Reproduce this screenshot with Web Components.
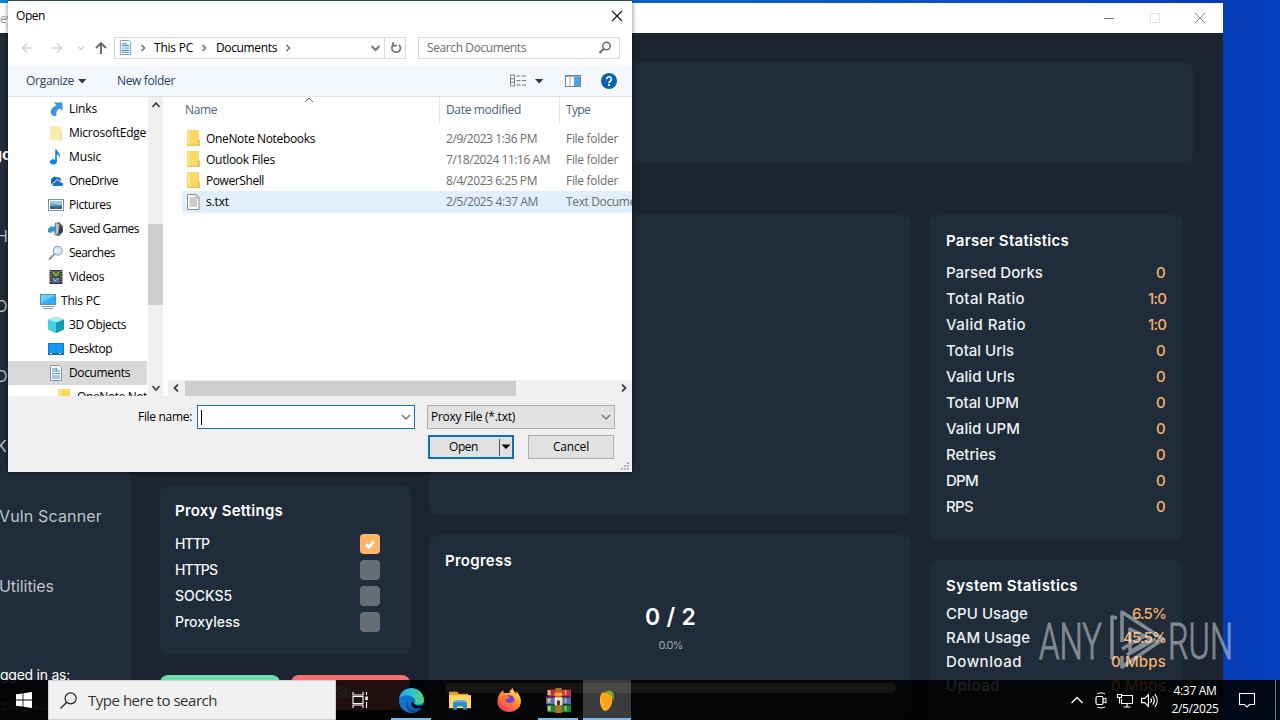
<!DOCTYPE html>
<html lang="en">
<head>
<meta charset="utf-8">
<title>Desktop</title>
<style>
  html, body { margin: 0; width: 1280px; height: 720px; overflow: hidden; }
</style>
</head>
<body>
<desk-top>
  <parser-window></parser-window>
  <open-dialog></open-dialog>
  <any-run-mark></any-run-mark>
  <task-bar></task-bar>
</desk-top>

<script>
const ICONS = {
  back: `<path d="M12.5 8h-10M7 3.5L2.5 8 7 12.5" fill="none" stroke="#d4d4d4" stroke-width="1.5"/>`,
  forward: `<path d="M3.500 8h10M9 3.500L13.500 8 9 12.500" fill="none" stroke="#d4d4d4" stroke-width="1.5"/>`,
  smallDown: `<path d="M5 6.500l3 3 3-3" fill="none" stroke="#cfcfcf" stroke-width="1.300"/>`,
  up: `<path d="M8 14V3M3 8l5-5 5 5" fill="none" stroke="#666" stroke-width="1.900"/>`,
  right: `<path d="M6.500 5L9.500 8l-3 3" fill="none" stroke="#777" stroke-width="1.700"/>`,
  down: `<path d="M4 6l4 4 4-4" fill="none" stroke="#777" stroke-width="1.500"/>`,
  boldDown: `<path d="M4.500 6l4 4 4-4" fill="none" stroke="#777" stroke-width="2"/>`,
  scrollUp: `<path d="M4.500 10L8 6l3.500 4" fill="none" stroke="#444" stroke-width="1.800"/>`,
  scrollDown: `<path d="M4.500 6L8 10l3.500-4" fill="none" stroke="#444" stroke-width="1.800"/>`,
  scrollLeft: `<path d="M10 4.500L6.500 8l3.500 3.500" fill="none" stroke="#444" stroke-width="1.800"/>`,
  scrollRight: `<path d="M6 4.500L9.500 8 6 11.500" fill="none" stroke="#444" stroke-width="1.800"/>`,
  refresh: `<path d="M12 4.800a4.300 4.300 0 1 1-5.500-.2M6 2v3.600h3.800" fill="none" stroke="#6d6d6d" stroke-width="1.600"/>`,
  lens: `<circle cx="9.500" cy="6" r="3.700" fill="none" stroke="#6d6d6d" stroke-width="1.500"/><path d="M6.800 8.800L2.500 13" stroke="#6d6d6d" stroke-width="2"/>`,
  caret: `<path d="M4 6h8.400l-4.200 4.500z" fill="#27364f"/>`,
  blackCaret: `<path d="M3.500 5.500h9L8 10z" fill="#000"/>`,
  close: `<path d="M3 3l10 10M13 3L3 13" stroke="#111" stroke-width="1.100"/>`,
  winClose: `<path d="M3 3l10 10M13 3L3 13" stroke="#888" stroke-width="1"/>`,
  winMin: `<path d="M3 8.500h10" stroke="#777" stroke-width="1"/>`,
  winMax: `<rect x="3.500" y="3.500" width="9" height="9" fill="none" stroke="#e3e3e3"/>`,
  view: `<path d="M.5 2h4v11h-4zM.5 5.700h4M.5 9.300h4" fill="none" stroke="#777" stroke-width=".9"/><path d="M6.500 3h4m1.500 0h4M6.500 7.500h4m1.500 0h4M6.500 12h4m1.500 0h4" stroke="#777"/>`,
  pane: `<rect x=".5" y="2.500" width="15" height="11" fill="#fff" stroke="#7b858f"/><path d="M0 3h16" stroke="#7b858f" stroke-width="1.500"/><path d="M5 3v10" stroke="#aaa"/><rect x="9" y="4" width="6" height="9" fill="#4ba3e3"/>`,
  help: `<circle cx="8" cy="8" r="8" fill="#0a62b5"/><path d="M5.600 6.200a2.400 2.400 0 1 1 3.700 2c-.9.600-1.300 1-1.300 2" fill="none" stroke="#fff" stroke-width="1.700"/><rect x="7.100" y="11.200" width="1.800" height="1.800" fill="#fff"/>`,
  links: `<path d="M6 1.500h8.500V10L11.700 7.400C9 9 7.600 11 8.700 15H5C.5 10.500 3.500 6.500 8.400 4.200z" fill="#3d93dc"/>`,
  folderPale: `<path d="M2 1h11v5l1 1v8.500H2z" fill="#faedb4"/><path d="M12 7h2v8.500h-2" fill="#f4e19a"/>`,
  folder: `<path d="M2 0h12v9l.7 1v5.500H2z" fill="#fbd968"/><path d="M3 1h1.800v13.500H3" fill="#ffe792"/><path d="M12.700 9.500h2v6h-2z" fill="#ebbd4c"/><path d="M2 15.300h12.700" stroke="#dcaf3a" stroke-width=".8"/>`,
  music: `<ellipse cx="5.300" cy="12.800" rx="3.500" ry="2.600" fill="#1583dc"/><path d="M7.200.5h1.500c.4 3 4.800 4 3.200 9.200.1-3-1.400-3.800-3.100-4.400V13H7.200z" fill="#1583dc"/>`,
  onedrive: `<path d="M3 9C2.600 5 6 2.500 9 4.400c2-.5 4 .8 4 3.100l-2.600 4.200H3.600A3 3 0 0 1 3 9" fill="#0b64b5"/><path d="M5.500 13.500c-2-1-1.500-4.300 1-4.300C7.500 6 11.500 6 12.200 8.800c3.700-.4 4.200 4 1.700 4.700z" fill="#1673cc" stroke="#fff" stroke-width="1"/>`,
  pictures: `<rect x=".5" y="2.500" width="15" height="11" fill="#fff" stroke="#89929c"/><rect x="2" y="4" width="12" height="8" fill="#8fcbf1"/><path d="M2 8.500l5 1 7-1.500v4H2z" fill="#3b6384"/><path d="M2 7c3-1 4 1 7 1l5 .5v1l-6 .5z" fill="#5c859a"/>`,
  games: `<path d="M7 2l4-1 4 4v6l-4 4-5-1z" fill="#596364"/><path d="M8 2l3 1-1 10-4 1z" fill="#b5c0c1"/><path d="M12 5l2 2v4l-3 2z" fill="#303638"/><path d="M0 8l3-3 2 1 3-1v7l-3-2-2 2-3-1z" fill="#398ecf"/>`,
  search: `<circle cx="9.700" cy="5.700" r="4.400" fill="#d9f0fb" stroke="#94a7b5" stroke-width="1.200"/><path d="M6.300 9.200L1 14.500" stroke="#7f98aa" stroke-width="2"/>`,
  videos: `<rect x="1.500" y="1" width="13" height="14" fill="#343434"/><path d="M3 2v12M13 2v12" stroke="#eee" stroke-width="1" stroke-dasharray="1 1.500"/><rect x="4.500" y="2" width="7" height="5.500" fill="#4b7a43"/><rect x="4.500" y="8.500" width="7" height="5.500" fill="#4066b5"/><path d="M5 3l3 4 3-4M5 9l2 3 4-3" stroke="#d3c642" fill="none"/>`,
  pc: `<rect x=".5" y="1.500" width="15" height="10" fill="#35aef3" stroke="#4b92c4"/><path d="M1 2h14L1 10z" fill="#72cdf9"/><path d="M1 13.500h14M3 15.500h10" stroke="#8ba7b8"/>`,
  cube: `<path d="M8 0l8 2.500v10L8 16l-8-3.500v-10z" fill="#2ab9c9"/><path d="M0 2.500l8 3V16l-8-3.500z" fill="#48d0dc"/><path d="M8 5.500l8-3v10L8 16z" fill="#169bae"/><path d="M0 2.500L8 0l8 2.500-8 3z" fill="#a8eef1"/>`,
  desktop: `<rect x=".5" y="2.500" width="15" height="11" fill="#159bf6" stroke="#157bbc"/><path d="M1 12.500h14" stroke="#0c5c96"/><path d="M2 12.500h2m7 0h2" stroke="#fff"/>`,
  documents: `<path d="M2.500.5h9l2 2v13h-11z" fill="#fff" stroke="#8798a4"/><path d="M4 4h4M4 6h8M4 8.500h2m1 0h5M4 11h8M4 13h8M8.500 3v3" stroke="#3f96cf" stroke-width="1.200"/>`,
  text: `<path d="M2.500.5h9l2.500 2.500v12.500H2.500z" fill="#fff" stroke="#8d8d8d"/><path d="M4.500 4h6M4.500 6h7.500M4.500 8h7.500M4.500 10h7.500M4.500 12h7.500" stroke="#9b9b9b"/><path d="M11 0v4h3" fill="#eee" stroke="#999"/>`,
  check: `<path d="M4 8.500l2.800 2.600L12 5.700" fill="none" stroke="#fff" stroke-width="2.900"/>`,
  start: `<path d="M0 2.300l6.600-.9v6.200H0zM7.400 1.300L16 0v7.600H7.400zM0 8.400h6.600v6.200L0 13.700zM7.400 8.400H16V16l-8.600-1.200z" fill="#fff"/>`,
  taskSearch: `<circle cx="10" cy="6" r="5.200" fill="none" stroke="#222" stroke-width="1.100"/><path d="M6.300 9.700L.5 15.500" stroke="#222" stroke-width="1.200"/>`,
  taskView: `<path d="M1 0v3h10V0M1 16v-3h10v3M1 4.500h10v7H1zM14.500 0v3m0 7v6" fill="none" stroke="#fff" stroke-width="1.100"/><rect x="13.300" y="4.500" width="2.500" height="3.500" fill="#fff"/>`,
  edge: `<defs><linearGradient id="e" x1="0" x2="1"><stop offset="0" stop-color="#22a6e8"/><stop offset=".6" stop-color="#35c9c3"/><stop offset="1" stop-color="#61d75b"/></linearGradient></defs><circle cx="8" cy="8" r="8" fill="#1273cd"/><path d="M.2 6.500C1-1.500 14.700-2.600 16 7.500c.2 3-4.800 4-5.900 2.300C12 6.200 4.500 2.300.2 6.500z" fill="url(#e)"/><path d="M6 7c-1.800 4 1.700 9 8.600 6C9 18.800 1.600 14 6 7z" fill="#0b4ba3"/><path d="M9.500 10.200c2 1.700 4.500 1.500 6.200.2l-1 2.300c-3.800 1.200-6.600.2-7-2.700 0-1.500 1.500-1.500 1.800.2z" fill="#05070c"/>`,
  explorer: `<path d="M0 2h6l1 1.500h7V6H0z" fill="#dca32d"/><path d="M0 4.500h16V14H0z" fill="#ffd567"/><path d="M3 9.500h10V15h-2.800v-2.500H5.800V15H3z" fill="#308bc9"/><path d="M4 8h8v1.500H4z" fill="#63b4df"/>`,
  firefox: `<defs><linearGradient id="f" x1=".9" y1="0" x2=".2" y2="1"><stop offset="0" stop-color="#fff047"/><stop offset=".45" stop-color="#ff9730"/><stop offset="1" stop-color="#f22b65"/></linearGradient></defs><path d="M2 3.500l2-2 .5 1.800h4C8 2 9.500 1 10.500 0c.3 2.500 1.800 2.500 2.500 4V2c3.500 4.500 4 8.500 1 11.700C8.500 18.500 0 15.500.3 8.500.4 6.500 1 5 2 3.500z" fill="url(#f)"/><circle cx="8" cy="8.300" r="3.700" fill="#7341d8"/><path d="M4 5c2-1 4 0 4.300 1.600L5.500 8c1 2.500 4 2.800 6 .3.200 6-8.500 5-8.300 0z" fill="#ff722f"/>`,
  winrar: `<path d="M1 1h15v4.500H1z" fill="#c52b4c"/><path d="M0 6h16v4.500H0z" fill="#536bc1"/><path d="M1 11h15v4.500H1z" fill="#188a31"/><path d="M1 1.500h2v3H1m0 2h2v3H1m0 2h2v3H1m11-13h1v3h-1m0 2h1v3h-1m0 2h1v3h-1" fill="#d3c265"/><path d="M6 0h4v16H6z" fill="#bf6a22"/><path d="M5.500 3h5v2h-5" fill="#f6a928"/><path d="M5.500 6h5v5h-5" fill="#f6e4c7"/><path d="M7 8h2v3H7" fill="#523221"/>`,
  mango: `<path d="M4 3c3-2 8-.4 8 4.500 0 4-2.500 8-5 8.500C3.500 16 1.500 7 4 3z" fill="#ffa51d"/><path d="M3.500 5c.5 5 1 7 3 10-3-2-4-6-3-10z" fill="#ffc230"/><path d="M7 2c3-2.200 7-.8 6 6C12 4.800 9.500 4.200 7 2z" fill="#78a92c"/><path d="M6 3l.5-3 1.500 2" fill="#735125"/>`,
  trayUp: `<path d="M2.500 11L8 5.500l5.500 5.500" fill="none" stroke="#fff" stroke-width="1.300"/>`,
  camera: `<rect x="3" y="4.500" width="7" height="8" rx="1.500" fill="none" stroke="#fff" stroke-width="1.200"/><path d="M10 7.500L13 6v5l-3-1.500M4 2c2-1.500 6-1.500 8 0M4 15c2 1.200 6 1.200 8 0" fill="none" stroke="#fff"/>`,
  network: `<path d="M4 3.500h11.500v8H4.500V7M10 11.500V15M6.500 15h7M.5 2.500h4v3h-4zM2.500 5.500v6" fill="none" stroke="#fff" stroke-width="1.100"/>`,
  volume: `<path d="M.5 6h3l3.500-3.500v11L3.500 10h-3zM9 6q1.700 2 0 4M11 4q3 4 0 8M13 2q4.600 6 0 12" fill="none" stroke="#fff" stroke-width="1.100"/>`,
  notice: `<path d="M.5 1.500h15v11h-5L8 15l-2.500-2.500h-5z" fill="none" stroke="#fff" stroke-width="1.100"/>`
};

class UiIcon extends HTMLElement {
  constructor() {
    super();
    this.attachShadow({ mode: "open" });
  }

  connectedCallback() {
    const size = this.getAttribute("size") || 16;
    this.shadowRoot.innerHTML = `
      <style>
        :host { display: block; flex: none; width: ${size}px; height: ${size}px; }
        svg { display: block; overflow: visible; }
      </style>
      <svg width="${size}" height="${size}" viewBox="0 0 16 16">${ICONS[this.getAttribute("name")] || ""}</svg>`;
  }
}

// text label whose letter spacing is tuned so it takes up `w` pixels
class FitText extends HTMLElement {
  constructor() {
    super();
    this.attachShadow({ mode: "open" });
    // no whitespace around the slot: it would be kept by white-space: pre
    this.shadowRoot.innerHTML = "<style>:host { display: inline-block; flex: none; white-space: pre; }</style><slot></slot>";
  }

  connectedCallback() {
    const target = parseFloat(this.getAttribute("w"));
    const natural = this.getBoundingClientRect().width;
    const count = this.textContent.length;
    if (!target || !natural) return;
    this.style.letterSpacing = `${(target - natural) / count}px`;
  }
}

const fit = (text, w) => `<fit-text w="${w}">${text}</fit-text>`;

class StatRow extends HTMLElement {
  constructor() {
    super();
    this.attachShadow({ mode: "open" });
    this.shadowRoot.innerHTML = `
      <style>
        :host { display: flex; justify-content: space-between; align-items: center; height: var(--row, 26px); font-size: 15px; font-weight: 450; color: #edf0f3; }
        ::slotted([slot="value"]) { color: #f4b16e; }
      </style>
      <slot></slot><slot name="value"></slot>`;
  }
}

class CheckRow extends HTMLElement {
  constructor() {
    super();
    this.attachShadow({ mode: "open" });
    const on = this.hasAttribute("checked");
    this.shadowRoot.innerHTML = `
      <style>
        :host { display: flex; justify-content: space-between; align-items: center; height: 26px; font-size: 14px; font-weight: 450; line-height: 17px; color: #f4f6f8; }
        ::slotted(*) { padding-bottom: 1px; }
        .box { width: 20px; height: 20px; border-radius: 4px; background: ${on ? "#ffb46b" : "#686e75"}; display: grid; place-items: center; }
      </style>
      <slot></slot><span class="box">${on ? '<ui-icon name="check"></ui-icon>' : ""}</span>`;
  }
}

class PanelCard extends HTMLElement {
  constructor() {
    super();
    this.attachShadow({ mode: "open" });
    this.shadowRoot.innerHTML = `
      <style>
        :host { display: block; box-sizing: border-box; background: #202c39; border-radius: 8px; padding: 13px 16px 0; }
        .title { display: block; height: 26px; line-height: 26px; font-size: 15px; font-weight: 600; color: #fff; }
      </style>
      <span class="title"><slot name="title"></slot></span>
      <slot></slot>`;
  }
}

class ParserWindow extends HTMLElement {
  constructor() {
    super();
    this.attachShadow({ mode: "open" });
    const stats = [
      ["Parsed Dorks", 97, "0", 10], ["Total Ratio", 79, "1:0", 18], ["Valid Ratio", 80, "1:0", 18],
      ["Total Urls", 68, "0", 10], ["Valid Urls", 69, "0", 10], ["Total UPM", 73, "0", 10],
      ["Valid UPM", 74, "0", 10], ["Retries", 50, "0", 10], ["DPM", 32, "0", 10], ["RPS", 27, "0", 10]
    ];
    const system = [
      ["CPU Usage", 82, "6.5%", 34], ["RAM Usage", 84, "45.5%", 43],
      ["Download", 76, "0 Mbps", 55], ["Upload", 54, "0 Mbps", 55]
    ];
    const rows = list => list.map(([label, w, value, vw]) =>
      `<stat-row>${fit(label, w)}<fit-text slot="value" w="${vw}">${value}</fit-text></stat-row>`).join("");

    this.shadowRoot.innerHTML = `
      <style>
        :host { position: absolute; left: 0; top: 3px; width: 1223px; height: 717px; display: flex; flex-direction: column; background: #1c2431; font-family: Inter, "Open Sans", sans-serif; overflow: hidden; }
        .title { height: 30px; background: #fff; display: flex; align-items: center; box-sizing: border-box; padding-right: 15px; gap: 29.5px; flex: none; }
        .title span { flex: 1; font: 12px "Open Sans", sans-serif; color: #999; }
        .main { flex: 1; display: flex; min-height: 0; }
        .side { width: 130px; background: #202c39; color: #bec4ca; font-size: 16px; overflow: hidden; }
        .logo { height: 168px; box-sizing: border-box; padding-top: 110px; margin-left: -8px; font-size: 16px; line-height: 22px; font-weight: 700; color: #fff; }
        .item { height: 70px; line-height: 70px; margin-left: -4px; }
        .item fit-text { margin-left: 3px; }
        .user { font-size: 14px; color: #fff; padding-top: 42px; line-height: 24px; }
        .user div { font-size: 11px; line-height: 38px; color: #8b929a; }
        .page { flex: 1; padding: 30px 30px 0; min-width: 0; }
        .hero { height: 100px; border-radius: 8px; background: #202c39; }
        .cols { display: flex; margin-top: 52px; align-items: flex-start; }
        .left { width: 250px; margin: 271px 20px 0 0; }
        .mid { width: 481px; margin-right: 19px; display: grid; gap: 20px; }
        .right { width: 252px; display: grid; gap: 20px; }
        .left panel-card { height: 169px; padding: 12px 30px 0 15px; }
        .left .list { padding-top: 7px; }
        .buttons { display: flex; gap: 11px; margin-top: 20px; }
        .buttons div { flex: 1; height: 35px; border-radius: 8px; background: #6be0ac; line-height: 35px; text-align: center; font-size: 14px; color: #fff; }
        .buttons .stop { background: #fb6e70; }
        .log { height: 300px; }
        .progress { height: 180px; padding: 13px 15px 0; }
        .count { text-align: center; color: #fff; font-weight: 600; font-size: 23px; line-height: 30px; margin-top: 28px; }
        .pct { text-align: center; color: #a0a7ae; font-size: 11px; line-height: 16px; margin-top: 5px; }
        .bar { height: 10px; margin-top: 30px; border-radius: 5px; background: #a8a094; }
        .stats { height: 325px; }
        .stats .list { padding-top: 5px; }
        .system { height: 160px; --row: 24px; }
        .system .list { padding-top: 2px; }
      </style>
      <div class="title"><span>ey</span>
        <ui-icon name="winMin"></ui-icon><ui-icon name="winMax"></ui-icon><ui-icon name="winClose"></ui-icon></div>
      <div class="main">
        <div class="side">
          <div class="logo">go</div>
          <div class="item">H</div>
          <div class="item">D</div>
          <div class="item">D</div>
          <div class="item">K</div>
          <div class="item">${fit("Vuln Scanner", 103)}</div>
          <div class="item">${fit("Utilities", 55)}</div>
          <div class="user">${fit("gged in as:", 70)}<div>2Vegasus</div></div>
        </div>
        <div class="page">
          <div class="hero"></div>
          <div class="cols">
            <div class="left">
              <panel-card><fit-text slot="title" w="108">Proxy Settings</fit-text>
                <div class="list">
                  <check-row checked>${fit("HTTP", 34)}</check-row>
                  <check-row>${fit("HTTPS", 42)}</check-row>
                  <check-row>${fit("SOCKS5", 57)}</check-row>
                  <check-row>${fit("Proxyless", 65)}</check-row>
                </div>
              </panel-card>
              <div class="buttons"><div></div><div class="stop">Stop</div></div>
            </div>
            <div class="mid">
              <panel-card class="log"></panel-card>
              <panel-card class="progress"><fit-text slot="title" w="67">Progress</fit-text>
                <div class="count">${fit("0 / 2", 51)}</div>
                <div class="pct">${fit("0.0%", 24)}</div>
                <div class="bar"></div>
              </panel-card>
            </div>
            <div class="right">
              <panel-card class="stats"><fit-text slot="title" w="123">Parser Statistics</fit-text>
                <div class="list">${rows(stats)}</div>
              </panel-card>
              <panel-card class="system"><fit-text slot="title" w="132">System Statistics</fit-text>
                <div class="list">${rows(system)}</div>
              </panel-card>
            </div>
          </div>
        </div>
      </div>`;
  }
}

class FolderTree extends HTMLElement {
  constructor() {
    super();
    this.attachShadow({ mode: "open" });
    const items = [
      ["links", "Links", 28, 1], ["folderPale", "MicrosoftEdge", 77, 1], ["music", "Music", 32, 1],
      ["onedrive", "OneDrive", 49, 1], ["pictures", "Pictures", 42, 1], ["games", "Saved Games", 70, 1],
      ["search", "Searches", 46, 1], ["videos", "Videos", 35, 1], ["pc", "This PC", 39, 0],
      ["cube", "3D Objects", 57, 1], ["desktop", "Desktop", 43, 1], ["documents", "Documents", 61, 1],
      ["folder", "OneNote Not", 70, 2]
    ];
    this.shadowRoot.innerHTML = `
      <style>
        :host { display: flex; width: 155px; overflow: hidden; flex: none; }
        .items { width: 139px; margin-right: 1px; overflow: hidden; flex: none; }
        .item { display: flex; align-items: center; height: 24px; gap: 5px; padding-left: 40px; box-sizing: border-box; }
        .l0 { padding-left: 32px; }
        .l2 { padding-left: 48px; }
        .selected { background: #d9d9d9; }
        .scroll { width: 15px; background: #f0f0f0; display: flex; flex-direction: column; align-items: center; height: 299px; }
        .scroll i { width: 15px; height: 81px; background: #cdcdcd; margin: 111px 0 75px; flex: none; }
      </style>
      <div class="items">${items.map(([icon, label, w, lvl]) =>
        `<div class="item l${lvl}${label === "Documents" ? " selected" : ""}"><ui-icon name="${icon}"></ui-icon>${fit(label, w)}</div>`).join("")}</div>
      <div class="scroll"><ui-icon name="scrollUp"></ui-icon><i></i><ui-icon name="scrollDown"></ui-icon></div>`;
  }
}

class FileList extends HTMLElement {
  constructor() {
    super();
    this.attachShadow({ mode: "open" });
    const files = [
      ["folder", "OneNote Notebooks", 109, "2/9/2023 1:36 PM", 91, "File folder", 52],
      ["folder", "Outlook Files", 69, "7/18/2024 11:16 AM", 104, "File folder", 52],
      ["folder", "PowerShell", 58, "8/4/2023 6:25 PM", 91, "File folder", 52],
      ["text", "s.txt", 23, "2/5/2025 4:37 AM", 92, "Text Docume", 70]
    ];
    this.shadowRoot.innerHTML = `
      <style>
        :host { display: flex; flex-direction: column; flex: 1; min-width: 0; margin-left: 5px; color: #6d6d6d; overflow: hidden; }
        .head { display: flex; height: 26px; margin-bottom: 5px; color: #4c607a; flex: none; }
        .head div { box-sizing: border-box; border-right: 1px solid #e5e5e5; display: flex; align-items: center; padding-left: 6px; width: 120px; flex: none; }
        .head .name { width: 272px; padding-left: 17px; }
        .head .type { border: 0; }
        .sort { margin: -20px 0 0 87px; }
        .file { display: flex; height: 21px; align-items: center; margin-left: 14px; padding-left: 4px; overflow: hidden; }
        .file.hover { background: #e0effb; height: 22px; }
        .file .name { display: flex; gap: 4px; width: 260px; color: #000; align-items: center; flex: none; }
        .file .name ui-icon { margin: -1px 1px 0 -1px; }
        .file .date { width: 120px; flex: none; }
        .scroll { height: 16px; margin-top: auto; background: #f0f0f0; display: flex; align-items: center; }
        .scroll i { height: 15px; width: 331px; background: #cdcdcd; margin: 0 100px 0 1px; }
      </style>
      <div class="head">
        <div class="name">${fit("Name", 32)}<svg class="sort" width="10" height="6"><path d="M1 5l4-4 4 4" fill="none" stroke="#777"/></svg></div>
        <div>${fit("Date modified", 75)}</div><div class="type">${fit("Type", 24)}</div>
      </div>
      ${files.map(([icon, name, w, date, dw, type, tw]) => `
        <div class="file${icon === "text" ? " hover" : ""}">
          <div class="name"><ui-icon name="${icon}"></ui-icon>${fit(name, w)}</div>
          <div class="date">${fit(date, dw)}</div>${fit(type, tw)}
        </div>`).join("")}
      <div class="scroll"><ui-icon name="scrollLeft"></ui-icon><i></i><ui-icon name="scrollRight"></ui-icon></div>`;
  }
}

class OpenDialog extends HTMLElement {
  constructor() {
    super();
    this.attachShadow({ mode: "open" });
    this.shadowRoot.innerHTML = `
      <style>
        :host { position: absolute; left: 8px; top: 0; width: 624px; height: 472px; display: flex; flex-direction: column; box-sizing: border-box; border-top: 1px solid #34475a; background: #fff; font: 12px/16px "Open Sans", "Noto Sans", sans-serif; color: #000; box-shadow: 0 1px 5px rgba(0,0,0,.5); }
        .title { height: 30px; display: flex; align-items: center; justify-content: space-between; padding: 0 7px 0 8px; }
        .nav { height: 35px; display: flex; align-items: center; padding: 0 12px 2px; box-sizing: border-box; }
        .box { height: 22px; box-sizing: border-box; border: 1px solid #d9d9d9; display: flex; align-items: center; }
        .address { width: 292px; padding-left: 3px; margin: 0 12px 0 5px; }
        .reload { border-left: 1px solid #d9d9d9; height: 20px; width: 20px; display: grid; place-items: center; }
        .find { width: 202px; justify-content: space-between; padding: 0 6px 0 8px; color: #6d6d6d; }
        .tools { height: 31px; box-sizing: border-box; background: #f4f7fb; border-bottom: 1px solid #dfe5ec; display: flex; align-items: center; padding: 0 15px 0 18px; color: #27415f; }
        .body { display: flex; height: 299px; overflow: hidden; }
        .foot { flex: 1; background: #f0f0f0; padding: 9px 17px 0 0; position: relative; }
        .line { display: flex; justify-content: flex-end; align-items: center; }
        .line + .line { margin-top: 6px; padding-right: 1px; }
        .input { width: 218px; height: 24px; box-sizing: border-box; background: #fff; border: 1px solid #1b6fb5; margin: 0 12px 0 5px; display: flex; align-items: center; justify-content: space-between; padding-left: 3px; }
        .input b { width: 1px; height: 15px; background: #000; }
        .combo { width: 188px; height: 24px; box-sizing: border-box; border: 1px solid #adadad; background: #e2e2e2; display: flex; align-items: center; justify-content: space-between; padding-left: 3px; }
        .btn { width: 86px; height: 24px; box-sizing: border-box; border: 1px solid #adadad; background: #e1e1e1; display: flex; align-items: center; justify-content: center; }
        .btn.primary { border: 2px solid #0f6fbe; margin-right: 14px; justify-content: flex-end; }
        .primary i { height: 17px; width: 1px; background: #555; margin-left: 21px; }
        .primary ui-icon { margin: 0 -2px 0 -2px; }
        .grip { position: absolute; right: 2px; bottom: 1px; }
      </style>
      <div class="title">${fit("Open", 29)}<ui-icon name="close"></ui-icon></div>
      <div class="nav">
        <ui-icon name="back"></ui-icon>
        <ui-icon name="forward" style="margin-left:12px"></ui-icon>
        <ui-icon name="smallDown" style="margin-left:9px"></ui-icon>
        <ui-icon name="up" style="margin-left:4px"></ui-icon>
        <div class="box address">
          <ui-icon name="documents" size="15" style="margin-right:2px"></ui-icon>
          <ui-icon name="right"></ui-icon>
          <span style="margin-left:3px">${fit("This PC", 39)}</span>
          <ui-icon name="right" style="margin:0 4px 0 3px"></ui-icon>${fit("Documents", 61)}
          <ui-icon name="right" style="margin:0 auto 0 3px"></ui-icon>
          <ui-icon name="boldDown" style="margin-right:1px"></ui-icon>
          <div class="reload"><ui-icon name="refresh"></ui-icon></div>
        </div>
        <div class="box find">${fit("Search Documents", 99)}<ui-icon name="lens"></ui-icon></div>
      </div>
      <div class="tools">
        ${fit("Organize", 48)}<ui-icon name="caret"></ui-icon>
        <span style="margin:0 auto 0 27px">${fit("New folder", 58)}</span>
        <ui-icon name="view"></ui-icon>
        <ui-icon name="caret" style="margin-left:5px"></ui-icon>
        <ui-icon name="pane" style="margin-left:18px"></ui-icon>
        <ui-icon name="help" style="margin-left:20px"></ui-icon>
      </div>
      <div class="body"><folder-tree></folder-tree><file-list></file-list></div>
      <div class="foot">
        <div class="line">${fit("File name:", 54)}
          <div class="input"><b></b><ui-icon name="down"></ui-icon></div>
          <div class="combo">${fit("Proxy File (*.txt)", 84)}<ui-icon name="down"></ui-icon></div>
        </div>
        <div class="line">
          <div class="btn primary">${fit("Open", 29)}<i></i><ui-icon name="blackCaret"></ui-icon></div>
          <div class="btn">${fit("Cancel", 36)}</div>
        </div>
        <svg class="grip" width="9" height="9" fill="#b5b5b5"><path d="M6 0h2v2H6zM3 3h2v2H3zM6 3h2v2H6zM0 6h2v2H0zM3 6h2v2H3zM6 6h2v2H6z"/></svg>
      </div>`;
  }
}

class AnyRunMark extends HTMLElement {
  constructor() {
    super();
    this.attachShadow({ mode: "open" });
    this.shadowRoot.innerHTML = `
      <style>
        :host { position: absolute; left: 1036px; top: 604px; opacity: .5; }
        svg { display: block; }
        text { font: 300 50px Roboto, sans-serif; fill: #e4e8ec; stroke: #e4e8ec; stroke-width: .9; }
      </style>
      <svg width="200" height="72" viewBox="0 0 200 72">
        <text x="3" y="54.500" textLength="63" lengthAdjust="spacingAndGlyphs">ANY</text>
        <text x="132" y="54.500" textLength="65" lengthAdjust="spacingAndGlyphs">RUN</text>
        <g fill="none" stroke="#e4e8ec" stroke-width="3.500" stroke-linejoin="round">
          <path d="M81 14l-5-1v41h3M86 38V8l41 27-41 28V52M94 25v23l21-13z"/>
          <path d="M86 45l24-14M91 51l29-16"/>
        </g>
      </svg>`;
  }
}

class TaskBar extends HTMLElement {
  constructor() {
    super();
    this.attachShadow({ mode: "open" });
    const apps = [["edge", "open", 25], ["explorer", "", 22], ["firefox", "", 24], ["winrar", "open", 25], ["mango", "active", 22]];
    this.shadowRoot.innerHTML = `
      <style>
        :host { position: absolute; left: 0; bottom: 0; width: 1280px; height: 40px; display: flex; background: rgba(0,0,0,.87); font-family: "Open Sans", sans-serif; color: #fff; }
        .cell { width: 48px; display: grid; place-items: center; flex: none; }
        .search { width: 288px; box-sizing: border-box; background: #f1f1f1; border: 1px solid #d0d0d0; display: flex; align-items: center; gap: 11px; padding-left: 11px; color: #333; font-size: 15px; }
        .app { width: 48px; margin-right: 1px; display: grid; place-items: center; box-sizing: border-box; flex: none; }
        .open { background: linear-gradient(#7fb9e8, #7fb9e8) 50% 100% / 40px 2px no-repeat; }
        .active { background: rgba(255,255,255,.22); border-bottom: 2px solid #7fb9e8; padding-top: 2px; }
        .tray { display: flex; align-items: center; gap: 8px; margin-left: auto; padding-right: 12px; }
        .clock { width: 50px; text-align: center; font-size: 12px; line-height: 18px; padding-top: 2px; margin-right: 19px; }
        .peek { border-left: 1px solid #777; width: 4px; margin-left: 20px; }
      </style>
      <div class="cell"><ui-icon name="start"></ui-icon></div>
      <div class="search"><ui-icon name="taskSearch" size="17"></ui-icon>${fit("Type here to search", 129)}</div>
      <div class="cell"><ui-icon name="taskView"></ui-icon></div>
      <div style="width:3px"></div>
      ${apps.map(([name, state, size]) => `<div class="app ${state}"><ui-icon name="${name}" size="${size}"></ui-icon></div>`).join("")}
      <div class="tray"><ui-icon name="trayUp"></ui-icon><ui-icon name="camera"></ui-icon>
        <ui-icon name="network"></ui-icon><ui-icon name="volume" size="17"></ui-icon></div>
      <div class="clock">${fit("4:37 AM", 43)}<br>${fit("2/5/2025", 47)}</div>
      <div style="display:flex;align-items:center"><ui-icon name="notice"></ui-icon></div>
      <div class="peek"></div>`;
  }
}

class DeskTop extends HTMLElement {
  constructor() {
    super();
    this.attachShadow({ mode: "open" });
    this.shadowRoot.innerHTML = `
      <style>
        :host { display: block; position: relative; width: 1280px; height: 720px; overflow: hidden; background: linear-gradient(90deg, #0a83dc, #0f58c4 65%, #053cb6 95%, #033fbe); }
      </style>
      <slot></slot>`;
  }
}

customElements.define("ui-icon", UiIcon);
customElements.define("stat-row", StatRow);
customElements.define("check-row", CheckRow);
customElements.define("panel-card", PanelCard);
customElements.define("folder-tree", FolderTree);
customElements.define("file-list", FileList);
customElements.define("desk-top", DeskTop);
customElements.define("parser-window", ParserWindow);
customElements.define("open-dialog", OpenDialog);
customElements.define("any-run-mark", AnyRunMark);
customElements.define("task-bar", TaskBar);
// last, so every label is measured with its final font
customElements.define("fit-text", FitText);
</script>
</body>
</html>
